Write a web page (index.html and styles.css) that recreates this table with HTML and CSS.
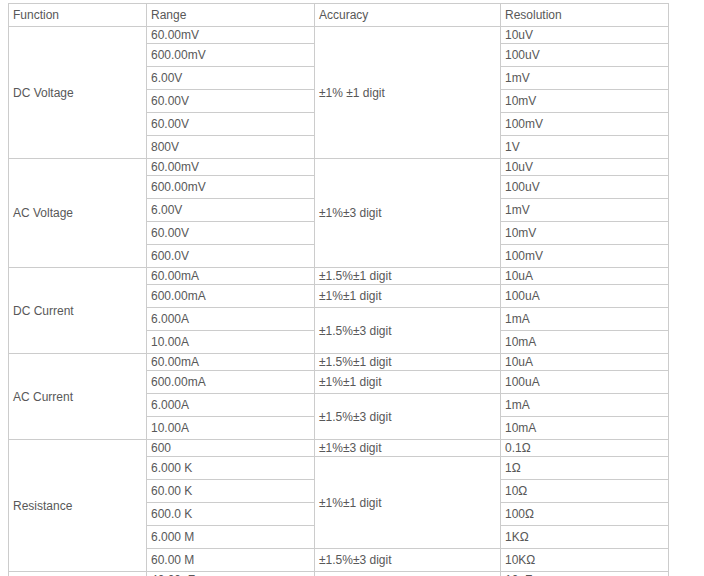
FILE: index.html
```html
<!DOCTYPE html>
<html>
<head>
<meta charset="utf-8">
<link rel="stylesheet" href="styles.css">
</head>
<body>
<table class="spec">
  <colgroup>
    <col class="c1"><col class="c2"><col class="c3"><col class="c4">
  </colgroup>
  <tr class="t"><td>Function</td><td>Range</td><td>Accuracy</td><td>Resolution</td></tr>

  <tr class="s"><td rowspan="6">DC Voltage</td><td>60.00mV</td><td rowspan="6">±1% ±1 digit</td><td>10uV</td></tr>
  <tr class="t"><td>600.00mV</td><td>100uV</td></tr>
  <tr class="t"><td>6.00V</td><td>1mV</td></tr>
  <tr class="t"><td>60.00V</td><td>10mV</td></tr>
  <tr class="t"><td>60.00V</td><td>100mV</td></tr>
  <tr class="t"><td>800V</td><td>1V</td></tr>

  <tr class="s"><td rowspan="5">AC Voltage</td><td>60.00mV</td><td rowspan="5">±1%±3 digit</td><td>10uV</td></tr>
  <tr class="t"><td>600.00mV</td><td>100uV</td></tr>
  <tr class="t"><td>6.00V</td><td>1mV</td></tr>
  <tr class="t"><td>60.00V</td><td>10mV</td></tr>
  <tr class="t"><td>600.0V</td><td>100mV</td></tr>

  <tr class="s"><td rowspan="4">DC Current</td><td>60.00mA</td><td>±1.5%±1 digit</td><td>10uA</td></tr>
  <tr class="t"><td>600.00mA</td><td>±1%±1 digit</td><td>100uA</td></tr>
  <tr class="t"><td>6.000A</td><td rowspan="2">±1.5%±3 digit</td><td>1mA</td></tr>
  <tr class="t"><td>10.00A</td><td>10mA</td></tr>

  <tr class="s"><td rowspan="4">AC Current</td><td>60.00mA</td><td>±1.5%±1 digit</td><td>10uA</td></tr>
  <tr class="t"><td>600.00mA</td><td>±1%±1 digit</td><td>100uA</td></tr>
  <tr class="t"><td>6.000A</td><td rowspan="2">±1.5%±3 digit</td><td>1mA</td></tr>
  <tr class="t"><td>10.00A</td><td>10mA</td></tr>

  <tr class="s"><td rowspan="6">Resistance</td><td>600</td><td>±1%±3 digit</td><td>0.1Ω</td></tr>
  <tr class="t"><td>6.000 K</td><td rowspan="4">±1%±1 digit</td><td>1Ω</td></tr>
  <tr class="t"><td>60.00 K</td><td>10Ω</td></tr>
  <tr class="t"><td>600.0 K</td><td>100Ω</td></tr>
  <tr class="t"><td>6.000 M</td><td>1KΩ</td></tr>
  <tr class="t"><td>60.00 M</td><td>±1.5%±3 digit</td><td>10KΩ</td></tr>

  <tr class="s"><td rowspan="4">Capacitance</td><td>40.00nF</td><td rowspan="4">±3%±5 digit</td><td>10pF</td></tr>
  <tr class="t"><td>400.0nF</td><td>100pF</td></tr>
  <tr class="t"><td>4.000uF</td><td>1nF</td></tr>
  <tr class="t"><td>40.00uF</td><td>10nF</td></tr>
</table>
</body>
</html>
```

FILE: styles.css
```css
html, body {
  margin: 0;
  padding: 0;
  background: #ffffff;
}

.spec {
  margin: 3px 0 0 8px;
  border-collapse: collapse;
  table-layout: fixed;
  width: 660px;
  font-family: "Liberation Sans", Arial, sans-serif;
  font-size: 12px;
  color: #585858;
}

.c1 { width: 138px; }
.c2 { width: 168px; }
.c3 { width: 186px; }
.c4 { width: 168px; }

.spec td {
  border: 1px solid #cccccc;
  padding: 0 4px;
  vertical-align: middle;
  line-height: 14px;
  white-space: nowrap;
}

.spec tr.t td { height: 22px; }
.spec tr.s td { height: 16px; }
.spec tr.s td[rowspan] { height: auto; }
```
